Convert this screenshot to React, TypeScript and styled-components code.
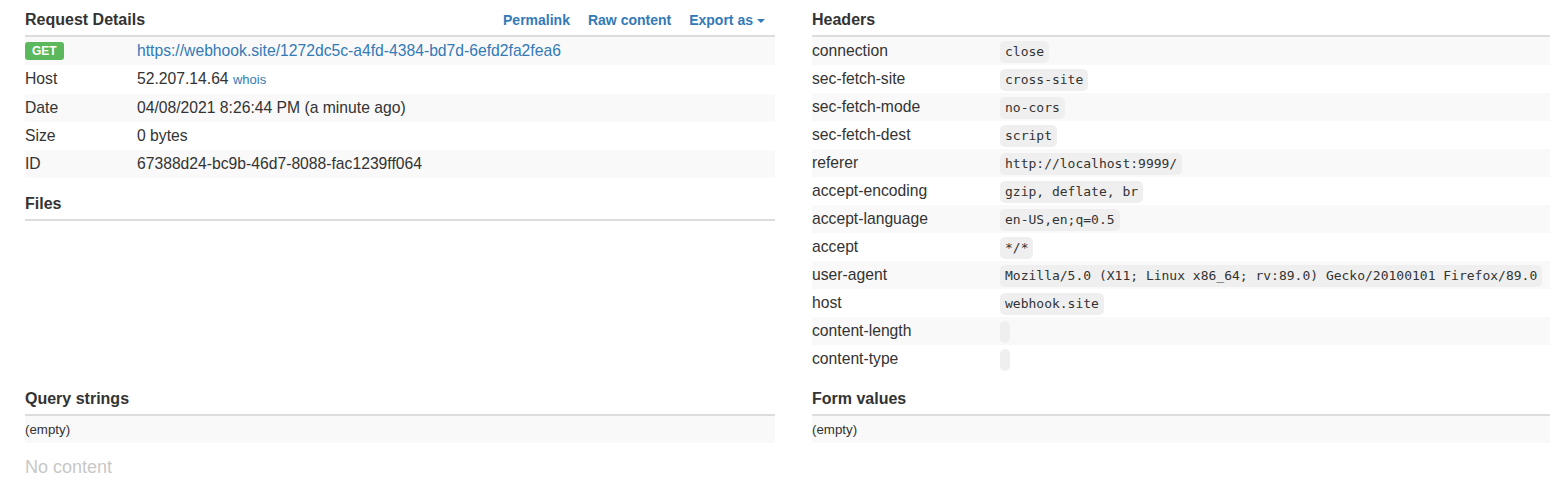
import React from "react";
import styled, { createGlobalStyle } from "styled-components";

const GlobalStyle = createGlobalStyle`
  body {
    margin: 0;
    background: #fff;
    color: #333;
    font-family: "Liberation Sans", Arial, sans-serif;
    font-size: 15.7px;
  }
`;

const Page = styled.div`
  display: grid;
  grid-template-columns: 750px 1fr;
  column-gap: 37px;
  row-gap: 6px;
  padding-left: 25px;
  align-items: start;
`;

const Column = styled.div`
  display: flex;
  flex-direction: column;
  gap: 6px;
  min-width: 0;
`;

const Section = styled.section``;

const Title = styled.div`
  display: flex;
  align-items: baseline;
  justify-content: space-between;
  height: 30px;
  padding-top: 5px;
  line-height: 30px;
  border-bottom: 2px solid #ddd;
`;

const TitleText = styled.h3`
  margin: 0;
  font-size: 16px;
  font-weight: bold;
  color: #333;
`;

const Actions = styled.div`
  display: flex;
  align-items: baseline;
  gap: 18px;
  margin-right: 10px;
`;

const ActionLink = styled.a`
  color: #337ab7;
  font-size: 14px;
  font-weight: bold;
  text-decoration: none;
  cursor: pointer;
`;

const Caret = styled.span`
  display: inline-block;
  width: 0;
  height: 0;
  margin-left: 4px;
  vertical-align: middle;
  border-top: 4px solid #337ab7;
  border-left: 4px solid transparent;
  border-right: 4px solid transparent;
`;

const Table = styled.table`
  width: 100%;
  border-collapse: collapse;
  table-layout: fixed;
`;

const Row = styled.tr`
  &:nth-child(odd) {
    background: #f9f9f9;
  }
`;

const KeyCell = styled.td<{ $width: number }>`
  width: ${(p) => p.$width}px;
  padding: 4px 0;
  line-height: 20px;
  vertical-align: top;
  white-space: nowrap;
`;

const ValueCell = styled.td<{ $code?: boolean }>`
  padding: ${(p) => (p.$code ? "4px 0 2px" : "4px 0")};
  line-height: 20px;
  vertical-align: top;
  white-space: nowrap;
`;

const Link = styled.a`
  color: #337ab7;
  text-decoration: none;
`;

const Small = styled.small`
  font-size: 13px;
`;

const Badge = styled.span`
  display: inline-block;
  background: #5cb85c;
  color: #fff;
  font-size: 12px;
  font-weight: bold;
  line-height: 1;
  padding: 3px 7px 3px;
  border-radius: 3px;
  vertical-align: 1px;
`;

const Code = styled.code`
  display: inline-block;
  height: 22px;
  line-height: 22px;
  padding: 0 5px;
  background: #efefef;
  color: #333;
  border-radius: 5px;
  font-family: "DejaVu Sans Mono", "Liberation Mono", monospace;
  font-size: 13px;
  white-space: nowrap;
  vertical-align: top;
`;

const EmptyRow = styled.div`
  background: #f9f9f9;
  padding: 4px 0;
  line-height: 19px;
  font-size: 13.3px;
`;

const Muted = styled.div`
  margin-top: 14px;
  color: #c8c8c8;
  font-size: 18px;
  line-height: 20px;
`;

const details: [string, React.ReactNode][] = [
  [
    "",
    <Link href="#">https://webhook.site/1272dc5c-a4fd-4384-bd7d-6efd2fa2fea6</Link>,
  ],
  [
    "Host",
    <>
      52.207.14.64{" "}
      <Small>
        <Link href="#">whois</Link>
      </Small>
    </>,
  ],
  ["Date", "04/08/2021 8:26:44 PM (a minute ago)"],
  ["Size", "0 bytes"],
  ["ID", "67388d24-bc9b-46d7-8088-fac1239ff064"],
];

const headers: [string, string][] = [
  ["connection", "close"],
  ["sec-fetch-site", "cross-site"],
  ["sec-fetch-mode", "no-cors"],
  ["sec-fetch-dest", "script"],
  ["referer", "http://localhost:9999/"],
  ["accept-encoding", "gzip, deflate, br"],
  ["accept-language", "en-US,en;q=0.5"],
  ["accept", "*/*"],
  [
    "user-agent",
    "Mozilla/5.0 (X11; Linux x86_64; rv:89.0) Gecko/20100101 Firefox/89.0",
  ],
  ["host", "webhook.site"],
  ["content-length", ""],
  ["content-type", ""],
];

export default function App() {
  return (
    <>
      <GlobalStyle />
      <Page>
        <Column>
          <Section>
            <Title>
              <TitleText>Request Details</TitleText>
              <Actions>
                <ActionLink>Permalink</ActionLink>
                <ActionLink>Raw content</ActionLink>
                <ActionLink>
                  Export as
                  <Caret />
                </ActionLink>
              </Actions>
            </Title>
            <Table>
              <tbody>
                {details.map(([key, value], i) => (
                  <Row key={i}>
                    <KeyCell $width={112}>{i === 0 ? <Badge>GET</Badge> : key}</KeyCell>
                    <ValueCell>{value}</ValueCell>
                  </Row>
                ))}
              </tbody>
            </Table>
          </Section>
          <Section>
            <Title>
              <TitleText>Files</TitleText>
            </Title>
          </Section>
        </Column>

        <Column>
          <Section>
            <Title>
              <TitleText>Headers</TitleText>
            </Title>
            <Table>
              <tbody>
                {headers.map(([key, value]) => (
                  <Row key={key}>
                    <KeyCell $width={188}>{key}</KeyCell>
                    <ValueCell $code>
                      <Code>{value}</Code>
                    </ValueCell>
                  </Row>
                ))}
              </tbody>
            </Table>
          </Section>
        </Column>

        <Column>
          <Section>
            <Title>
              <TitleText>Query strings</TitleText>
            </Title>
            <EmptyRow>(empty)</EmptyRow>
            <Muted>No content</Muted>
          </Section>
        </Column>

        <Column>
          <Section>
            <Title>
              <TitleText>Form values</TitleText>
            </Title>
            <EmptyRow>(empty)</EmptyRow>
          </Section>
        </Column>
      </Page>
    </>
  );
}
